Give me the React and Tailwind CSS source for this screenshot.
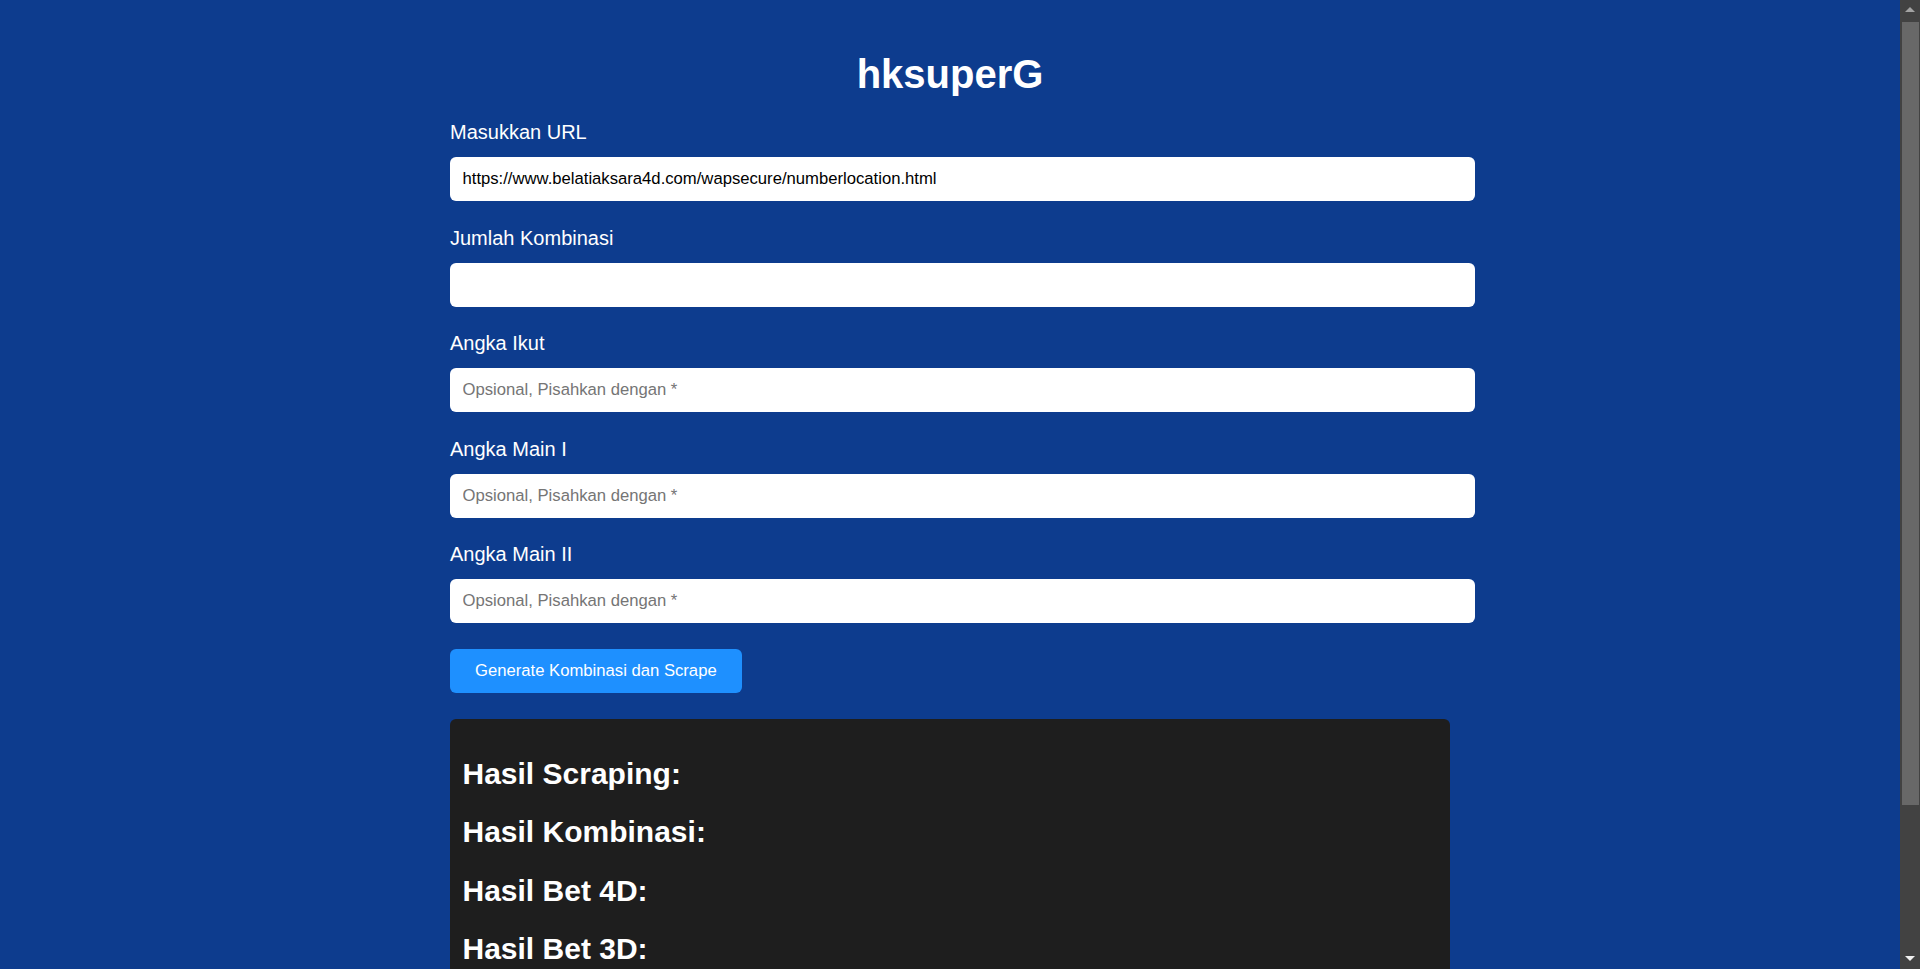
import React from "react";

const fields = [
  { label: "Masukkan URL", value: "https://www.belatiaksara4d.com/wapsecure/numberlocation.html", placeholder: "" },
  { label: "Jumlah Kombinasi", value: "", placeholder: "" },
  { label: "Angka Ikut", value: "", placeholder: "Opsional, Pisahkan dengan *" },
  { label: "Angka Main I", value: "", placeholder: "Opsional, Pisahkan dengan *" },
  { label: "Angka Main II", value: "", placeholder: "Opsional, Pisahkan dengan *" },
];

const results = ["Hasil Scraping:", "Hasil Kombinasi:", "Hasil Bet 4D:", "Hasil Bet 3D:"];

export default function App() {
  return (
    <div className="flex h-screen overflow-hidden bg-[#0d3c8e] font-['Liberation_Sans',Arial,sans-serif]">
      <main className="flex-1 overflow-hidden">
        <div className="w-[1000px] mx-auto pt-[25px]">
          <h1 className="text-[40px] leading-[46px] font-bold text-white text-center mt-[26px] mb-[24px]">
            hksuperG
          </h1>

          {fields.map((f) => (
            <div key={f.label} className="mb-[25.5px]">
              <label className="block text-[20px] leading-[23px] text-white mb-[13px]">{f.label}</label>
              <input
                type="text"
                defaultValue={f.value}
                placeholder={f.placeholder}
                className="block w-[1025px] h-[44px] px-[12.5px] rounded-[6px] bg-white text-black text-[16.67px] placeholder:text-[#757575] outline-none border-0"
              />
            </div>
          ))}

          <button className="block h-[44px] px-[25px] rounded-[6px] bg-[#1e90ff] text-white text-[16.67px] leading-[19px]">
            Generate Kombinasi dan Scrape
          </button>

          <div className="mt-[26px] bg-[#1e1e1e] rounded-[6px] px-[12.5px] pt-[13px] pb-[40px]">
            {results.map((r) => (
              <h2 key={r} className="text-[30px] leading-[33.5px] font-bold text-white mt-[25px]">
                {r}
              </h2>
            ))}
          </div>
        </div>
      </main>

      {/* scrollbar */}
      <div className="w-[20px] h-full bg-[#424242] flex flex-col items-center">
        <div className="h-[20px] flex items-center justify-center">
          <svg width="10" height="6" viewBox="0 0 10 6">
            <polygon points="5,0 10,5 0,5" fill="#a3a3a3" />
          </svg>
        </div>
        <div className="w-[17px] h-[783px] mt-[2px] bg-[#686868]" />
        <div className="flex-1" />
        <div className="h-[20px] flex items-center justify-center">
          <svg width="10" height="6" viewBox="0 0 10 6">
            <polygon points="0,0 10,0 5,5" fill="#f0f0f0" />
          </svg>
        </div>
      </div>
    </div>
  );
}
